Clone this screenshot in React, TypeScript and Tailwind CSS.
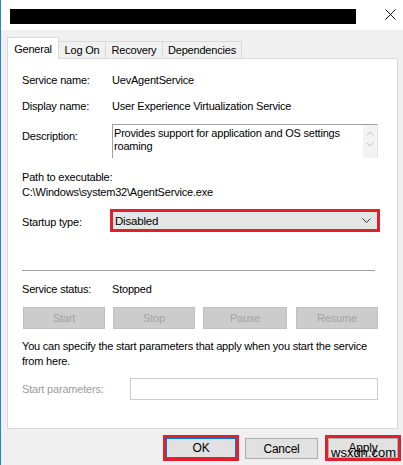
import React from "react";

const Btn = ({ label, w, className = "" }: { label: string; w: string; className?: string }) => (
  <div
    className={`${w} h-[22px] bg-[#cccccc] border border-[#bfbfbf] flex items-center justify-center text-[#a3a3a3] ${className}`}
  >
    {label}
  </div>
);

export default function App() {
  return (
    <div className="relative w-[403px] h-[465px] overflow-hidden bg-[#f0f0f0] border-l border-[#2b7fd6] text-black font-['Liberation_Sans',Arial,sans-serif] text-[11px] tracking-[-0.2px] leading-[16px]">
      {/* Title bar */}
      <div className="h-[30px] bg-white flex items-start">
        <div className="ml-[9px] mt-[9px] w-[346px] h-[15px] bg-black" />
        <svg className="ml-auto mr-[7px] mt-[9px]" width="11" height="11" viewBox="0 0 11 11">
          <path d="M0.5 0.5 L10.5 10.5 M10.5 0.5 L0.5 10.5" stroke="#111" strokeWidth="1" fill="none" />
        </svg>
      </div>

      {/* Tabs */}
      <div className="relative z-10 h-[28px] flex items-end pl-[6px]">
        <div className="w-[52px] h-[22px] -mb-px bg-white border border-b-0 border-[#d9d9d9] flex items-center justify-center">
          General
        </div>
        <div className="w-[48px] h-[17px] -ml-px bg-[#f0f0f0] border border-b-0 border-[#d9d9d9] flex items-center justify-center">
          Log On
        </div>
        <div className="w-[58px] h-[17px] -ml-px bg-[#f0f0f0] border border-b-0 border-[#d9d9d9] flex items-center justify-center">
          Recovery
        </div>
        <div className="w-[80px] h-[17px] -ml-px bg-[#f0f0f0] border border-b-0 border-[#d9d9d9] flex items-center justify-center">
          Dependencies
        </div>
      </div>

      {/* Panel */}
      <div className="ml-[6px] w-[391px] h-[371px] bg-white border border-[#d9d9d9] pl-[14px] flex flex-col">
        <div className="mt-[13px] flex">
          <div className="w-[90px]">Service name:</div>
          <div>UevAgentService</div>
        </div>
        <div className="mt-[10px] flex">
          <div className="w-[90px]">Display name:</div>
          <div>User Experience Virtualization Service</div>
        </div>
        <div className="mt-[10px] flex">
          <div className="w-[90px] pt-[4px]">Description:</div>
          <div className="w-[266px] h-[34px] border-t border-l border-[#a0a0a0] border-r border-r-[#e3e3e3] flex">
            <div className="flex-1 pl-px pt-[2px] leading-[13px]">
              Provides support for application and OS settings
              <br />
              roaming
            </div>
            <div className="w-[14px] bg-[#f3f3f3] flex flex-col items-center pt-[6px] gap-[6px]">
              <svg width="8" height="5" viewBox="0 0 8 5">
                <path d="M0.5 4.5 L4 1 L7.5 4.5" stroke="#c2c2c2" fill="none" />
              </svg>
              <svg width="8" height="5" viewBox="0 0 8 5">
                <path d="M0.5 0.5 L4 4 L7.5 0.5" stroke="#c2c2c2" fill="none" />
              </svg>
            </div>
          </div>
        </div>
        <div className="mt-[12px] leading-[15px]">Path to executable:</div>
        <div className="leading-[15px]">C:\Windows\system32\AgentService.exe</div>
        <div className="mt-[9px] flex items-center">
          <div className="w-[88px] pt-[2px]">Startup type:</div>
          <div className="w-[270px] h-[23px] border-[3px] border-[#e0202e] bg-[#e5e5e5] flex items-center pl-[2px] pr-[6px]">
            <span className="flex-1 text-[11.5px]">Disabled</span>
            <svg width="9" height="5" viewBox="0 0 9 5">
              <path d="M0.5 0.5 L4.5 4.5 L8.5 0.5" stroke="#333" fill="none" />
            </svg>
          </div>
        </div>
        <div className="mt-[38px] w-[353px] h-px bg-[#a0a0a0]" />
        <div className="mt-[10px] flex">
          <div className="w-[90px]">Service status:</div>
          <div>Stopped</div>
        </div>
        <div className="mt-[10px] flex">
          <Btn label="Start" w="w-[82px]" className="ml-px" />
          <Btn label="Stop" w="w-[82px]" className="ml-[8px]" />
          <Btn label="Pause" w="w-[84px]" className="ml-[8px]" />
          <Btn label="Resume" w="w-[82px]" className="ml-[9px]" />
        </div>
        <div className="mt-[10px] leading-[15px]">
          You can specify the start parameters that apply when you start the service
          <br />
          from here.
        </div>
        <div className="mt-[9px] flex items-center">
          <div className="w-[108px] text-[#9c9c9c]">Start parameters:</div>
          <div className="w-[248px] h-[22px] border border-[#cccccc] bg-white" />
        </div>
      </div>

      {/* Bottom buttons */}
      <div className="mt-[6px] flex items-start">
        <div className="ml-[162px] w-[76px] h-[26px] border-[3px] border-[#e0202e]">
          <div className="w-full h-full bg-[#e1e1e1] border border-[#0078d7] flex items-center justify-center text-[12px]">
            OK
          </div>
        </div>
        <div className="ml-[6px] mt-[3px] w-[73px] h-[21px] bg-[#e1e1e1] border border-[#adadad] flex items-center justify-center text-[12px]">
          Cancel
        </div>
        <div className="ml-[7px] w-[76px] h-[26px] border-[3px] border-[#e0202e]">
          <div className="w-full h-full bg-[#e1e1e1] border border-[#adadad] flex items-start justify-center pt-[1px] text-[12px]">
            Apply
          </div>
        </div>
      </div>

      {/* Watermark */}
      <div className="absolute left-[330px] top-[446px] text-[13px] leading-[14px] tracking-[0px] text-black">
        wsxdn.com
      </div>
    </div>
  );
}
